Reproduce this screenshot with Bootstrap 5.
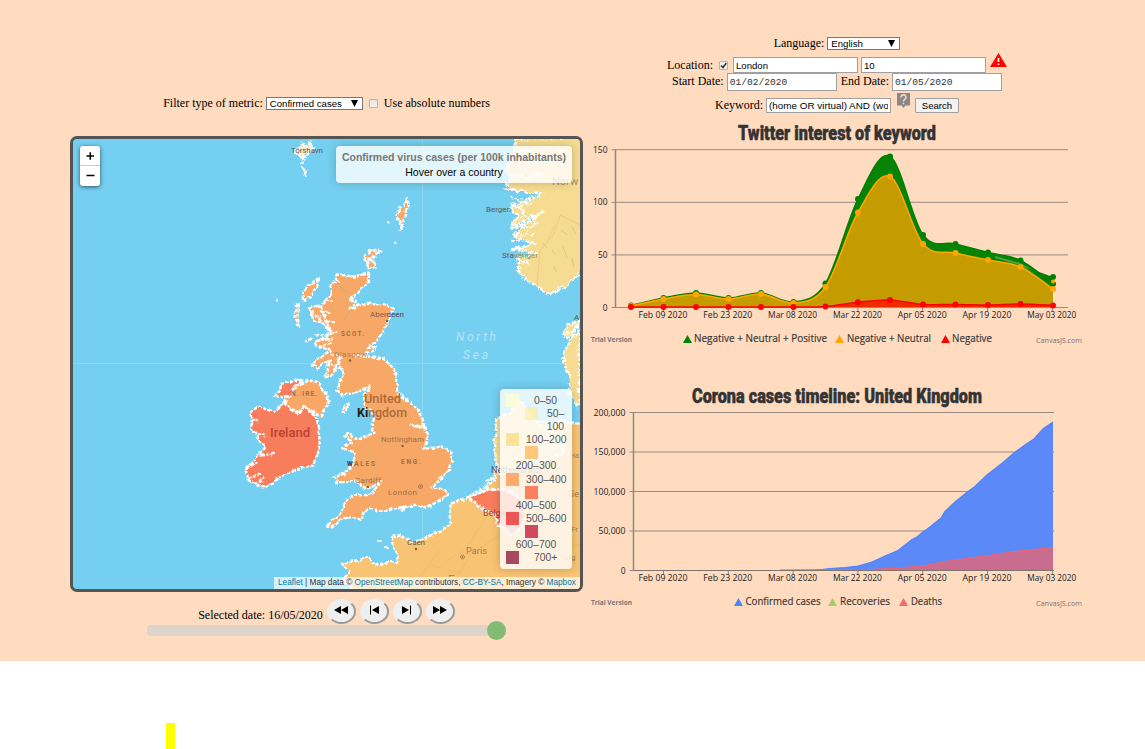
<!DOCTYPE html>
<html lang="en">
<head>
<meta charset="utf-8">
<meta name="viewport" content="width=device-width, initial-scale=1">
<title>Corona map</title>
<link href="https://cdn.jsdelivr.net/npm/bootstrap@5.3.0/dist/css/bootstrap.min.css" rel="stylesheet">
<style>
body{font:12px/15px "Liberation Serif",serif;color:#000;background:#fff;overflow:hidden}
.stage{background:#ffdbbf;height:661px;padding-left:70px;gap:4px}
.left-col{width:513px;padding-top:96px}
.right-col{width:500px;padding-top:35px}
.ctl{font:9.6px/11px "Liberation Sans",sans-serif;color:#000;background:#fff;border:1px solid #a0a0a0;border-radius:0;padding:1px 2px;outline:0;display:block}
.pick{appearance:none;height:13px;padding:0 3px;border-color:#777;background:#fff url("data:image/svg+xml,%3Csvg xmlns='http://www.w3.org/2000/svg' width='7' height='7'%3E%3Cpath d='M0 0h7L3.5 7z'/%3E%3C/svg%3E") no-repeat right 4px center}
.tick{appearance:none;width:9px;height:9px;border:1px solid #b5b5b5;border-radius:1px;background:linear-gradient(#e2e2e2,#f4f4f4);margin:0}
.tick:checked{background:#eee url("data:image/svg+xml,%3Csvg xmlns='http://www.w3.org/2000/svg' viewBox='0 0 7 7'%3E%3Cpath d='M1 3.5l2 2L6.3 1' fill='none' stroke='%23333' stroke-width='1.5'/%3E%3C/svg%3E")}
.r-lang{height:16px}.r-loc{height:22px;margin-top:3px}.r-date{height:18px;margin-top:-3px}.r-key{height:22px;margin-top:3px}
.r-date span{padding-top:1px}
.w125{width:125px;height:16px}.dt{width:110px;height:18px;color:#333;font-family:"Liberation Mono",monospace;padding-bottom:1px}
.go{width:44px;height:15px;padding:0;background:#f2f2f2;text-align:center;line-height:13px;border-radius:1px}
.map-box{height:456px;border:3px solid #555;border-radius:7px;overflow:hidden;background:#75cff0;margin-top:25px;font-family:"Liberation Sans",sans-serif}
.map-box>svg,.plot{display:block}
.zoomer{left:7px;top:7px;width:20px;height:40px;border-radius:3px;background:#fff;box-shadow:0 1px 4px rgba(0,0,0,.6)}
.zoomer svg{display:block}
.info{right:8px;top:7px;width:236px;height:37px;padding-top:4px;background:rgba(255,255,255,.8);box-shadow:0 0 10px rgba(0,0,0,.2);border-radius:4px;font-size:10.5px}
.info b{color:#777;font-size:10.500px;white-space:nowrap}
.key{right:8px;top:250px;width:72px;height:180px;padding:5px 6px;background:rgba(255,255,255,.8);box-shadow:0 0 10px rgba(0,0,0,.2);border-radius:4px;font-size:10.4px;line-height:13.1px;color:#555}
.key>div{height:13.1px}
.sw{width:13px;height:13px;opacity:.7;flex:none}
.sw.mid{margin-left:19px}
.credit{right:0;bottom:0;width:306px;height:12px;line-height:12px;background:rgba(255,255,255,.7);color:#333;font-size:8.25px;white-space:nowrap;padding-left:4px}
.credit span{color:#0078a8}
.play{height:26px;margin-top:7px;gap:4px}
.round{width:29px;height:25px;border:2px solid;border-color:#efefef #999 #999 #efefef;border-radius:50%;background:#efefef;padding:0}
.round svg{display:block;margin:auto;margin-top:-3px}
.slide{width:359px;height:11px;border-radius:4px;background:#ddd4cb;margin:0 0 0 77px}
.slide i{right:0;top:-4px;width:19px;height:19px;border-radius:50%;background:#82bc74}
.yellow{width:9px;height:26px;background:#ff0;margin:62px 0 0 166px}
.plot text{font-family:"Open Sans",sans-serif;fill:#222}
.plot .ttl{font:900 20px Roboto,sans-serif;fill:#333;stroke:#333;stroke-width:.5}
.plot .ax{font-size:9px}.plot .lg{font-size:10.5px;fill:#333;stroke:#333;stroke-width:.15}.plot .cr{font-size:7.5px;fill:#777}.plot .tv{font-weight:700}
.geo path{stroke:#fff;stroke-width:7;stroke-dasharray:11 4;stroke-linejoin:round}
.lab{font-family:Roboto,sans-serif}
</style>
</head>
<body>
<main class="stage d-flex align-items-start">
<section class="left-col">
  <div class="d-flex justify-content-center align-items-center" style="height:15px">
    <span>Filter type of metric:</span>
    <select class="ctl pick" style="width:97px;margin-left:3px"><option>Confirmed cases</option></select>
    <input class="tick" type="checkbox" style="margin:0 6px 0 6px"><span>Use absolute numbers</span>
  </div>
  <div class="map-box position-relative">
    <svg width="507" height="450" viewBox="73 139 507 450">
      <defs><filter id="coast" x="-5%" y="-5%" width="110%" height="110%"><feTurbulence type="fractalNoise" baseFrequency=".16" numOctaves="2" seed="4"/><feDisplacementMap in="SourceGraphic" scale="5" xChannelSelector="R" yChannelSelector="G"/></filter>
      <filter id="fjord" x="-5%" y="-5%" width="110%" height="110%"><feTurbulence type="fractalNoise" baseFrequency=".2" numOctaves="2" seed="8"/><feDisplacementMap in="SourceGraphic" scale="8" xChannelSelector="R" yChannelSelector="G"/></filter></defs>
      <path d="M422.5 139V589M73 363.500H580" stroke="#8fd6f0" stroke-width="1" fill="none"/>
      <g filter="url(#coast)"><g class="geo" transform="translate(230.500 260.500) scale(.33333)">
        <path fill="#f7a866" d="M318 42L345 45 370 48 418 38 415 60 395 82 372 108 355 118 380 122 360 145 400 130 470 132 487 142 480 170 462 205 440 240 410 262 440 262 400 285 370 288 430 288 460 296 490 325 497 355 500 390 512 410 540 425 560 445 572 470 583 500 545 493 580 500 592 530 580 565 605 562 635 558 662 575 665 605 655 630 640 645 610 675 600 682 645 690 650 700 635 715 590 740 545 735 520 740 500 742 470 750 440 750 425 745 400 750 395 770 390 782 370 770 345 772 325 782 312 798 288 795 300 785 320 770 330 755 350 720 365 705 425 703 440 675 455 660 430 675 410 685 390 675 375 660 350 665 320 665 310 650 340 640 365 615 372 600 370 575 350 570 335 565 360 550 362 540 340 525 355 520 375 535 400 530 420 525 432 520 425 505 430 470 425 450 405 440 400 420 405 395 420 380 395 385 375 395 355 400 340 405 320 390 325 370 340 345 335 325 325 315 330 285 305 345 285 350 290 320 300 300 275 310 262 325 248 315 255 300 285 280 300 270 275 260 260 255 255 245 275 235 305 220 290 200 285 180 280 160 275 140 285 115 305 100 300 75 320 60Z"/>
        <path fill="#f7a866" d="M160 425L185 395 200 375 235 360 265 365 275 385 295 415 293 435 270 465 245 455 220 440 205 460 180 450ZM335 460L340 440 355 432 347 452ZM262 55L260 80 240 110 218 120 215 95 240 70ZM205 130L203 195 195 170 195 138ZM235 140L265 135 285 180 300 210 270 185 250 180ZM220 245L245 232M405 8L430 0 435 20 412 24ZM505 742L520 740 515 748ZM405 0L408-12 402-18 415-22 412-32 428-30 450-28 434-18 428-5ZM510-92L508-120 494-138 508-148 505-155 518-164 530-184 538-170 528-155 524-140 518-115Z"/>
        <path fill="none" d="M240 160L270 170M245 150L285 195M255 225L320 215M260 240L310 235M265 262L305 245M300 280L335 290M290 300L320 325M285 120L310 125M275 150L300 160M285 180L310 182"/>
        <path fill="#f77d5c" d="M160 425L185 450 205 460 220 435 240 455 260 475 262 500 268 540 262 580 250 615 215 620 180 632 145 655 105 678 80 675 55 660 45 625 75 595 105 560 90 545 75 520 60 500 70 480 60 460 75 440 105 445 130 455ZM130 407L150 390 150 370 185 365 200 355 215 362 190 378 180 405 160 410Z"/>
        <path fill="none" d="M60 480L90 482M65 515L105 525M90 585L130 580M45 625L80 608M55 655L95 635M70 672L100 655"/>
        <path fill="#f8c373" d="M713 708L680 722 660 730 657 795 630 810 590 830 545 845 510 825 485 825 485 850 500 880 500 905 470 905 435 915 410 890 380 900 335 910 355 935 340 955 380 1005H1060V490L860 480 820 530 800 600 790 660 755 700Z"/>
        <path fill="#f6dc90" d="M870 420L840 455 800 475 790 560 805 640 870 620 1000 580V480L930 500Z"/>
        <path fill="none" d="M720 705L770 675 785 650M750 690L790 685M765 660L800 650"/>
        <path fill="#f77d5c" d="M713 710L770 690 820 685 875 715 885 780 850 825 805 795 795 765 760 745Z"/>
      </g></g>
      <g filter="url(#fjord)"><g class="geo" transform="translate(430.500 180.500) scale(.33333)">
        <path fill="#f6dc90" d="M255-125L320-130H460V262L430 295 395 325 350 340 318 315 285 300 262 270 268 230 320 220 250 205 310 190 250 165 340 90 245 145 260 105 240 80 335 40 225 25 240-10 225-35 245-65ZM448 420L410 435 400 465 425 470 448 450V680L420 650 415 610 425 590 402 560 400 520Z"/>
        <path fill="#f9efcf" d="M-408-90L-395-95-385-112-375-100-360-118-350-90-375-80-385-68ZM-388-53L-380-50M-385-65L-375-60M-385-38L-372-15 -375-28Z"/>
        <path fill="none" d="M245 70L280 90M250 120L285 105M255 160L310 165M250 205L315 190M240 50L300 70M260 235L295 250M320 95L315 130 285 150M230 30L260 25M265 140L300 120M270 60L275 100M255-60L320-55M240-20L290-10 340-20M250-100L300-85M410 460L445 440M235 90L250 75M245 185L275 175"/>
      </g></g>
      <g fill="none" stroke="#d8b56d" stroke-width=".8" opacity=".45"><path d="M580 225L560 215 554 234 540 250 537 285M555 225L545 245M380 352L390 367 372 385M431 565L460 573 470 555 500 535 520 550 580 545M440 550L415 583M491 510L465 550 448 560M368 445L375 462 370 480"/><path stroke="#8aab8a" d="M561 230l6 5M572 227l4 7M552 250l3 4M563 246l4 12M554 266l2 6M572 258l2 9M547 248l-4-5M340 286l7 7M350 310l-7 11"/></g>
      <g class="lab" font-size="8" fill="#5e5651">
        <text x="291" y="153" textLength="32">Torshavn</text><text x="486" y="212" textLength="25">Bergen</text><text x="502" y="258" textLength="36">Sta<tspan fill="#a38b5c">vanger</tspan></text>
        <text x="370" y="317" textLength="34" fill="#7e6145">Aber<tspan fill="#443f3c">deen</tspan></text><text x="334" y="357" textLength="33" fill="#b97a48">Glasgow</text>
        <text x="381" y="442" textLength="43" fill="#a06d44">Nottingham</text><text x="355" y="483" textLength="26" fill="#a06d44">Cardiff</text><text x="388" y="495" textLength="29" fill="#a06d44">London</text>
        <text x="407" y="545" textLength="18">Caen</text><text x="466" y="554" font-size="9" textLength="21" fill="#a27b4a">Paris</text>
        <g font-weight="700" font-size="6.500" fill="#a66c3e"><text x="341" y="336" textLength="23">SCOT.</text><text x="291" y="396" textLength="26">N. IRE.</text><text x="347" y="466" textLength="28"><tspan fill="#333">W</tspan>ALES</text><text x="401" y="464" textLength="20">ENG.</text></g>
        <g font-size="12" font-weight="500" fill="#ab6a3c"><text x="364" y="403" textLength="37" lengthAdjust="spacingAndGlyphs">United</text><text x="357" y="417" textLength="50" lengthAdjust="spacingAndGlyphs"><tspan fill="#222" font-weight="700">Ki</tspan>ngdom</text><text x="270" y="437" textLength="40" lengthAdjust="spacingAndGlyphs" fill="#b74335">Ireland</text></g>
        <text x="552" y="185" font-size="11" fill="#aa9563">Norw</text><text x="491" y="473" font-size="9">Netherlands</text><text x="483" y="516" font-size="9" fill="#a44136">Belgium</text><text x="448" y="584" font-size="12" fill="#b18854">France</text><text x="568" y="497" font-size="9" fill="#a77d49">Ge</text><text x="570" y="458" font-size="7" fill="#a77d49">Ha</text><text x="571" y="532" fill="#a77d49">Fr</text><text x="564" y="560" fill="#a77d49">urg</text><text x="574" y="320">A</text>
        <g fill="#b5e4f8" font-style="italic" font-size="12"><text x="456" y="341" textLength="40">North</text><text x="463" y="359" textLength="25">Sea</text></g>
        <g fill="#8f5d36"><circle cx="350" cy="360.500" r="1.200"/><circle cx="402.500" cy="446" r="1.200"/><circle cx="368" cy="487" r="1.200"/><circle cx="416" cy="549" r="1.200"/><circle cx="387" cy="321" r="1.200"/><circle cx="420.500" cy="486.500" r=".8"/><circle cx="462.500" cy="557" r=".8"/><circle cx="420.500" cy="486.500" r="2" fill="none" stroke="#8f5d36" stroke-width=".6"/><circle cx="462.500" cy="557" r="2" fill="none" stroke="#8f5d36" stroke-width=".6"/></g>
      </g>
      <path d="M378 541l3 0M385 547l3 1M277 300l0 .5M388 222l.5 .5M395 242.500l.5 .5" stroke="#fff" stroke-width="2" stroke-linecap="round"/>
    </svg>
    <div class="zoomer position-absolute"><svg width="20" height="40"><path d="M0 19.500H20" stroke="#ccc"/><path d="M6.500 10H14M10.300 6.200V13.800M6.500 29.500H14.500" stroke="#000" stroke-width="1.500"/></svg></div>
    <div class="info position-absolute text-center"><b>Confirmed virus cases (per 100k inhabitants)</b><br>Hover over a country</div>
    <div class="key position-absolute">
      <div class="d-flex"><i class="sw" style="background:#ffffcc"></i><span style="margin-left:15px">0–50</span></div>
      <div class="d-flex"><i class="sw mid" style="background:#ffeda0"></i><span style="margin-left:9px">50–</span></div>
      <div class="text-end pe-1" style="margin-right:-2px">100</div>
      <div class="d-flex justify-content-between"><i class="sw" style="background:#fed976"></i><span style="margin-right:-6px;width:46px">100–200</span></div>
      <div class="d-flex"><i class="sw mid" style="background:#feb24c"></i></div><div class="text-center">200–300</div>
      <div class="d-flex justify-content-between"><i class="sw" style="background:#fd8d3c"></i><span style="margin-right:-6px;width:46px">300–400</span></div>
      <div class="d-flex"><i class="sw mid" style="background:#fc4e2a"></i></div><div class="text-center">400–500</div>
      <div class="d-flex justify-content-between"><i class="sw" style="background:#e31a1c"></i><span style="margin-right:-6px;width:46px">500–600</span></div>
      <div class="d-flex"><i class="sw mid" style="background:#bd0026"></i></div><div class="text-center">600–700</div>
      <div class="d-flex"><i class="sw" style="background:#800026"></i><span style="margin-left:15px">700+</span></div>
    </div>
    <div class="credit position-absolute"><span>Leaflet</span> | Map data © <span>OpenStreetMap</span> contributors, <span>CC-BY-SA</span>, Imagery © <span>Mapbox</span></div>
  </div>
  <div class="play d-flex justify-content-center">
    <span style="padding-top:9px">Selected date: 16/05/2020</span>
    <button class="round" aria-label="First"><svg width="16" height="10"><path d="M8 1V9L1 5zM15 1V9L8 5z"/></svg></button>
    <button class="round" aria-label="Previous"><svg width="16" height="10"><path d="M4 .5h1V9.500H4zM13 1V9L6 5z"/></svg></button>
    <button class="round" aria-label="Next"><svg width="16" height="10"><path d="M3 1V9L10 5zM11 .5h1V9.500h-1z"/></svg></button>
    <button class="round" aria-label="Last"><svg width="16" height="10"><path d="M1 1V9L8 5zM8 1V9L15 5z"/></svg></button>
  </div>
  <div class="slide position-relative"><i class="position-absolute"></i></div>
</section>
<section class="right-col">
  <div class="r-lang d-flex justify-content-center align-items-center"><span>Language:</span><select class="ctl pick" style="width:73px;margin-left:3px"><option>English</option></select></div>
  <div class="r-loc d-flex justify-content-center align-items-center"><span>Location:</span><input class="tick" type="checkbox" checked style="margin:0 5px 0 6px"><input class="ctl w125" value="London"><input class="ctl w125" value="10" style="margin-left:3px">
    <svg width="17" height="15" style="margin:-9px 0 0 4px"><path d="M8.500 0L17 14H0z" fill="red"/><path d="M8.500 5v4M8.500 10.500v1.500" stroke="#fff" stroke-width="1.600"/></svg></div>
  <div class="r-date d-flex justify-content-center"><span>Start Date:</span><input class="ctl dt" value="01/02/2020" style="margin:0 4px 0 3px"><span>End Date:</span><input class="ctl dt" value="01/05/2020" style="margin-left:3px"></div>
  <div class="r-key d-flex justify-content-center align-items-center"><span>Keyword:</span><input class="ctl w125" value="(home OR virtual) AND (work OR office)" style="margin-left:3px;height:15px;font-size:9.900px">
    <svg width="15" height="15" style="margin:-9px 4px 0 5px"><path d="M1 0H14V12.500H9.500L7.500 15 5.500 12.500H1z" fill="#888"/><path d="M5 4.500C5 1 10 1 10 4.200 10 6 7.500 6 7.500 8.500M7.500 9.800v1.500" fill="none" stroke="#ffdabf" stroke-width="1.500"/></svg>
    <button class="ctl go">Search</button></div>
  <svg class="plot" id="tw" width="500" height="245" viewBox="587 115 500 245" style="margin-top:-1px"></svg>
  <svg class="plot" id="co" width="500" height="255" viewBox="587 360 500 255"></svg>
</section>
</main>
<div class="yellow"></div>
<script src="https://cdn.jsdelivr.net/npm/bootstrap@5.3.0/dist/js/bootstrap.bundle.min.js"></script>
<script>
const xs=[631,663.5,696,728.5,761,793.5,825.5,858,890,923,955.5,988,1020.5,1053];
const dates=['Feb 09 2020','Feb 23 2020','Mar 08 2020','Mar 22 2020','Apr 05 2020','Apr 19 2020','May 03 2020'];
function txt(x,y,w,s,c,a='start'){return `<text x="${x}" y="${y}" class="${c}" textLength="${w}" lengthAdjust="spacingAndGlyphs" text-anchor="${a}">${s}</text>`}
function axes(x0,x1,y0,step,labels,title,tx,tw,ty){
  const widths={1:4.8,2:9.6,3:14.5,6:27,7:32};
  let o=txt(tx,ty,tw,title,'ttl','middle');
  labels.forEach((l,i)=>{const y=y0-i*step;o+=`<path d="M${x0-4} ${y}H${x1}" stroke="#998b82"/>`+txt(x0-8,y+3,widths[l.length],l,'ax','end')});
  o+=`<path d="M${x0} ${y0-step*(labels.length-1)}V${y0}" stroke="#888" stroke-width="1.5"/>`;
  dates.forEach((d,i)=>{const x=663.5+i*64.8;o+=`<path d="M${x} ${y0}v4" stroke="#888"/>`+txt(x-.5,y0+10.5,49,d,'ax','middle')});
  return o+txt(591,y0+34.5,41,'Trial Version','cr tv')+txt(1036,y0+35.5,46,'CanvasJS.com','cr');
}
function curve(p){let d='M'+p[0];for(let i=0;i<p.length-1;i++){const a=p[i-1]||p[i],b=p[i],c=p[i+1],e=p[i+2]||c;d+=`C${b[0]+(c[0]-a[0])/6} ${b[1]+(c[1]-a[1])/6} ${c[0]-(e[0]-b[0])/6} ${c[1]-(e[1]-b[1])/6} ${c}`}return d}
function series(ys,fill,line){const p=xs.map((x,i)=>[x,ys[i]]),d=curve(p);return `<path d="${d}V307H631Z" fill="${fill}"/><path d="${d}" fill="none" stroke="${line}" stroke-width="1.6"/>`+p.map(q=>`<circle cx="${q[0]}" cy="${q[1]}" r="3" fill="${line}"/>`).join('')}
function tri(x,y,c){return `<path d="M${x} ${y}h9l-4.500-8z" fill="${c}"/>`}
document.getElementById('tw').innerHTML=axes(615.5,1068,307.5,52.6,['0','50','100','150'],'Twitter interest of keyword',837,198,140)
 +series([305.5,298,293,298,293,302,283.5,199,156.5,235,244,252.5,260.5,284],'#078407','green')
 +'<path d="M995 257L1020 264 1040 275" stroke="#4da33c" stroke-width="2" fill="none"/><path d="M1025 267L1053 277V286z" fill="green"/><circle cx="1053" cy="277" r="3" fill="green"/>'
 +series([306,299,294.5,299,294,303,287,212.5,176.5,244,253,260,267,289],'#c49c00','orange')+'<circle cx="1053" cy="281.5" r="2" fill="orange"/>'
 +series([307,307,307,307,307,307,306.5,302.3,300,304.5,304.5,305,304,305.5],'#ef2b00','red')
 +tri(683,343,'green')+txt(694,342,133,'Negative + Neutral + Positive','lg')+tri(835,343,'orange')+txt(847,342,84,'Negative + Neutral','lg')+tri(941,343,'red')+txt(952,342,40,'Negative','lg');
const cases='817,570 830,568.500 845,567.500 858,566 872,562 885,556 898,550.500 912,539.500 917,537 923,532 930,527 941,518 945,511.500 955,502 968,491.500 975,486.500 987,475 1003,462.500 1014,453 1027,443.500 1034,439 1043,429 1053,422';
document.getElementById('co').innerHTML=axes(633.5,1054,570.5,39.5,['0','50,000','100,000','150,000','200,000'],'Corona cases timeline: United Kingdom',837,290,403)
 +`<polygon points="${cases} 1053,570" fill="#5b8af8"/><polyline points="${cases}" fill="none" stroke="#4f81ff" stroke-width="1.2"/>`
 +'<polygon points="780,570 870,569.500 900,568 925,565.500 945,561.500 985,556 1015,551.500 1053,547.500 1053,570" fill="#ca6c90"/><polyline points="780,570 870,569.500 900,568 925,565.500 945,561.500 985,556 1015,551.500 1053,547.500" fill="none" stroke="#f36370" stroke-width="1.2"/><path d="M634 570.500H1054" stroke="#80756d"/>'
 +tri(734,606,'#5084ff')+txt(745.5,605,75,'Confirmed cases','lg')+tri(828,606,'#a3cf62')+txt(840,605,50,'Recoveries','lg')+tri(899,606,'#f26973')+txt(911,605,31,'Deaths','lg');
</script>
</body>
</html>
